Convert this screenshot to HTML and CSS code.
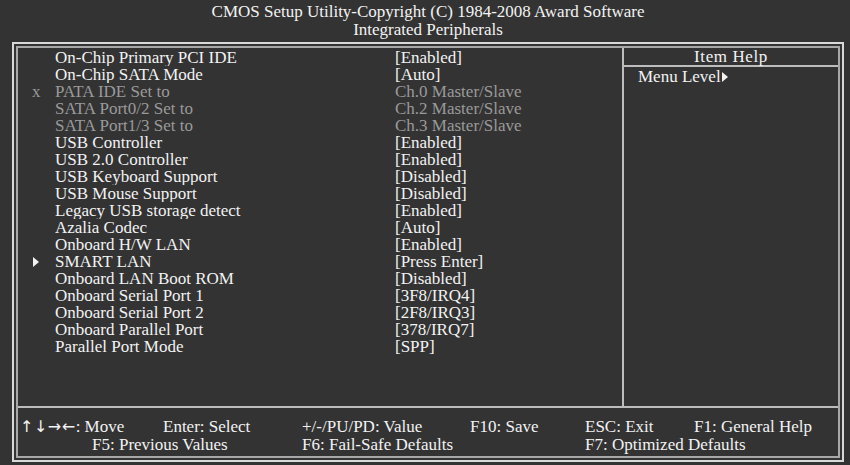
FILE: index.html
```
<!DOCTYPE html>
<html lang="en">
<head>
  <meta charset="UTF-8" />
  <title>CMOS Setup Utility - Integrated Peripherals</title>
  <link rel="stylesheet" href="styles.css">
</head>
<body>
  <div class="title">
    <div>CMOS Setup Utility-Copyright (C) 1984-2008 Award Software</div>
    <div>Integrated Peripherals</div>
  </div>

  <div class="frame">
    <div class="inner">
      <div class="main">
        <div class="list">
          <span></span><span>On-Chip Primary PCI IDE</span><span>[Enabled]</span>
          <span></span><span>On-Chip SATA Mode</span><span>[Auto]</span>
          <span class="off">x</span><span class="off">PATA IDE Set to</span><span class="off">Ch.0 Master/Slave</span>
          <span></span><span class="off">SATA Port0/2 Set to</span><span class="off">Ch.2 Master/Slave</span>
          <span></span><span class="off">SATA Port1/3 Set to</span><span class="off">Ch.3 Master/Slave</span>
          <span></span><span>USB Controller</span><span>[Enabled]</span>
          <span></span><span>USB 2.0 Controller</span><span>[Enabled]</span>
          <span></span><span>USB Keyboard Support</span><span>[Disabled]</span>
          <span></span><span>USB Mouse Support</span><span>[Disabled]</span>
          <span></span><span>Legacy USB storage detect</span><span>[Enabled]</span>
          <span></span><span>Azalia Codec</span><span>[Auto]</span>
          <span></span><span>Onboard H/W LAN</span><span>[Enabled]</span>
          <span><i class="tri"></i></span><span>SMART LAN</span><span>[Press Enter]</span>
          <span></span><span>Onboard LAN Boot ROM</span><span>[Disabled]</span>
          <span></span><span>Onboard Serial Port 1</span><span>[3F8/IRQ4]</span>
          <span></span><span>Onboard Serial Port 2</span><span>[2F8/IRQ3]</span>
          <span></span><span>Onboard Parallel Port</span><span>[378/IRQ7]</span>
          <span></span><span>Parallel Port Mode</span><span>[SPP]</span>
        </div>
        <div class="help">
          <div class="help-head">Item Help</div>
          <div class="help-body">Menu Level<i class="tri"></i></div>
        </div>
      </div>

      <div class="keys">
        <span class="k-move"><span class="arrows">↑↓→←</span>: Move</span>
        <span class="k-enter">Enter: Select</span>
        <span class="k-value">+/-/PU/PD: Value</span>
        <span class="k-save">F10: Save</span>
        <span class="k-exit">ESC: Exit</span>
        <span class="k-help">F1: General Help</span>
        <span class="k-f5">F5: Previous Values</span>
        <span class="k-f6">F6: Fail-Safe Defaults</span>
        <span class="k-f7">F7: Optimized Defaults</span>
      </div>
    </div>
  </div>
</body>
</html>
```
FILE: styles.css
```
body {
  font-family: "Liberation Serif", "Times New Roman", serif;
  font-size: 17px;
  background: #333333;
  color: #f2f2f2;
  margin: 0;
  padding: 3px 6px 0 12px;
  width: 832px;
}

.title {
  text-align: center;
  line-height: 18px;
  margin-bottom: 3px;
}

.frame {
  border: 2px solid #d9d9d9;
  padding: 2px;
}

.inner {
  border: 2px solid #a8a8a8;
}

.main {
  display: flex;
  height: 358px;
  border-bottom: 2px solid #bdbdbd;
}

/* Settings list */
.list {
  width: 590px;
  padding: 1px 0 0 14px;
  display: grid;
  grid-template-columns: 23px 340px 1fr;
  grid-auto-rows: 17px;
  line-height: 17px;
  align-content: start;
}

.list span {
  overflow: hidden;
  white-space: nowrap;
}

.off {
  color: #9a9a9a;
}

.tri {
  display: inline-block;
  width: 0;
  height: 0;
  border-top: 5px solid transparent;
  border-bottom: 5px solid transparent;
  border-left: 6px solid #f2f2f2;
  margin-left: 1px;
}

/* Help panel */
.help {
  flex: 1;
  border-left: 2px solid #bdbdbd;
}

.help-head {
  text-align: center;
  line-height: 16px;
  padding-top: 1px;
  border-bottom: 2px solid #bdbdbd;
  letter-spacing: 0.6px;
}

.help-body {
  padding: 1px 0 0 14px;
  line-height: 17px;
}

/* Key legend */
.keys {
  display: grid;
  grid-template-columns: 72px 71px 139px 168px 115px 109px 1fr;
  grid-template-rows: 18px 18px;
  line-height: 18px;
  padding: 10px 0 2px 2px;
}

.arrows {
  font-family: "DejaVu Sans", sans-serif;
  font-size: 16px;
  letter-spacing: 0.5px;
}

.k-move { grid-column: 1 / 3; }
.k-enter { grid-column: 3; }
.k-value { grid-column: 4; }
.k-save { grid-column: 5; }
.k-exit { grid-column: 6; }
.k-help { grid-column: 7; }
.k-f5 { grid-column: 2 / 4; grid-row: 2; }
.k-f6 { grid-column: 4 / 6; grid-row: 2; }
.k-f7 { grid-column: 6 / 8; grid-row: 2; }
```
